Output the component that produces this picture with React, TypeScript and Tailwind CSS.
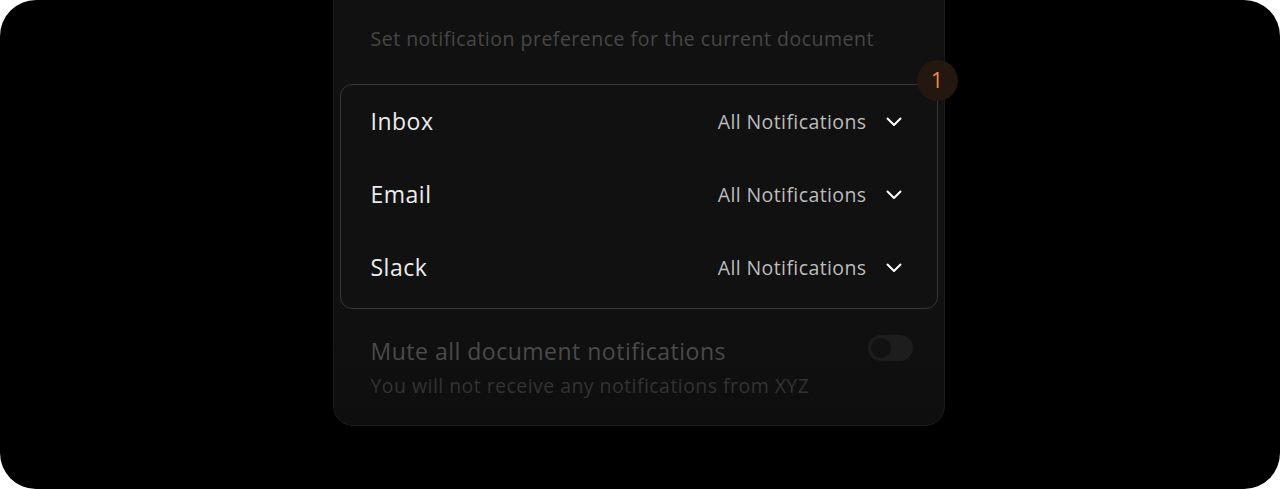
const channels = ['Inbox', 'Email', 'Slack'];

function Chevron() {
  return (
    <svg width="16" height="10" viewBox="0 0 16 10" fill="none" className="text-white">
      <path d="M1.5 1.5L8 8L14.5 1.5" stroke="currentColor" strokeWidth="2" strokeLinecap="round" strokeLinejoin="round" />
    </svg>
  );
}

function ChannelRow({ name }: { name: string }) {
  return (
    <div className="flex h-[73px] items-center justify-between pl-[30px] pr-[35px]">
      <span className="text-[23px] tracking-[0.5px] text-[#ececec]">{name}</span>
      <div className="flex items-center gap-[19px]">
        <span className="text-[19.5px] tracking-[0.4px] text-[#bdbdbd]">All Notifications</span>
        <Chevron />
      </div>
    </div>
  );
}

export default function App() {
  return (
    <div className="h-[489px] w-full bg-white" style={{ fontFamily: '"Open Sans", "Liberation Sans", sans-serif' }}>
      <div className="flex h-full justify-center overflow-hidden rounded-[36px] bg-black">
        <div className="-mt-[40px] mr-[3px] h-[466px] w-[612px] rounded-[20px] border border-[#1c1c1c] bg-gradient-to-b from-[#111111] from-70% to-[#0e0e0e] px-[6px]">
          <p className="pl-[31px] pt-[64px] text-[19.5px] leading-[28px] tracking-[0.5px] text-[#474747]">
            Set notification preference for the current document
          </p>

          <div className="relative mt-[31px] rounded-[12px] border-[1.5px] border-[#363636] bg-[#111111] pb-[4px]">
            {channels.map((c) => (
              <ChannelRow key={c} name={c} />
            ))}
            <span className="absolute -right-[21px] -top-[25px] flex h-[41px] w-[41px] items-center justify-center rounded-full bg-[#24170f] text-[21px] text-[#ee8c50]">
              1
            </span>
          </div>

          <div className="flex items-start justify-between pl-[31px] pr-[25px] pt-[27px]">
            <div>
              <p className="text-[23px] leading-[30px] tracking-[0.5px] text-[#4a4a4a]">Mute all document notifications</p>
              <p className="mt-[7px] text-[19.5px] leading-[26px] tracking-[0.45px] text-[#333333]">
                You will not receive any notifications from XYZ
              </p>
            </div>
            <div className="mt-[-1px] flex h-[26px] w-[45px] items-center rounded-full bg-[#1d1d1d] px-[3px]">
              <div className="h-[20px] w-[20px] rounded-full bg-[#121212]" />
            </div>
          </div>
        </div>
      </div>
    </div>
  );
}
